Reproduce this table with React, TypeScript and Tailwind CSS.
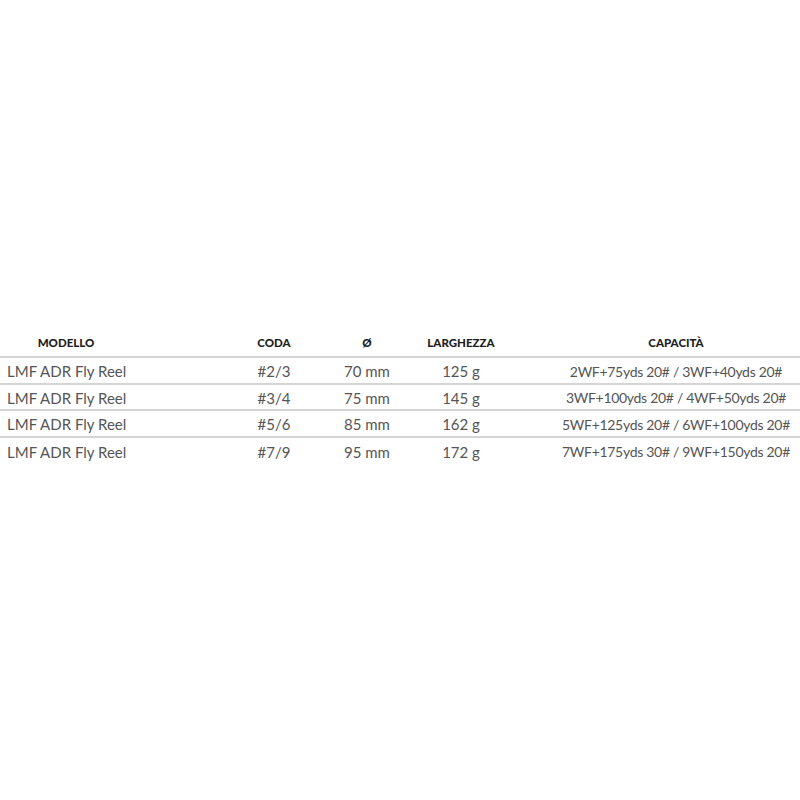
import React from "react";

const rows = [
  { model: "LMF ADR Fly Reel", coda: "#2/3", dia: "70 mm", peso: "125 g", cap: "2WF+75yds 20# / 3WF+40yds 20#" },
  { model: "LMF ADR Fly Reel", coda: "#3/4", dia: "75 mm", peso: "145 g", cap: "3WF+100yds 20# / 4WF+50yds 20#" },
  { model: "LMF ADR Fly Reel", coda: "#5/6", dia: "85 mm", peso: "162 g", cap: "5WF+125yds 20# / 6WF+100yds 20#" },
  { model: "LMF ADR Fly Reel", coda: "#7/9", dia: "95 mm", peso: "172 g", cap: "7WF+175yds 30# / 9WF+150yds 20#" },
];

const grid = "grid grid-cols-[226px_96px_90px_98px_1fr] items-center";

export default function App() {
  return (
    <div className="w-[800px] h-[800px] bg-white pt-[327px] font-['Lato','Liberation_Sans',sans-serif]">
      {/* en-tête */}
      <div className={`${grid} h-[31px] pt-[2px] text-[11.5px] font-black text-[#1e1e1e] border-b-2 border-[#d4d4d4]`}>
        <div className="w-[132px] text-center">MODELLO</div>
        <div className="text-center">CODA</div>
        <div className="text-center">Ø</div>
        <div className="text-center">LARGHEZZA</div>
        <div className="pl-[42px] text-center">CAPACITÀ</div>
      </div>
      {rows.map((r, i) => (
        <div
          key={r.coda}
          className={`${grid} h-[26.5px] pt-[2px] text-[15px] text-[#555] ${i < rows.length - 1 ? "border-b-2 border-[#d4d4d4]" : ""}`}
        >
          <div className="pl-[7px]">{r.model}</div>
          <div className="text-center">{r.coda}</div>
          <div className="text-center">{r.dia}</div>
          <div className="text-center">{r.peso}</div>
          <div className="pl-[42px] text-center whitespace-nowrap text-[14px] tracking-[-0.3px]">{r.cap}</div>
        </div>
      ))}
    </div>
  );
}
